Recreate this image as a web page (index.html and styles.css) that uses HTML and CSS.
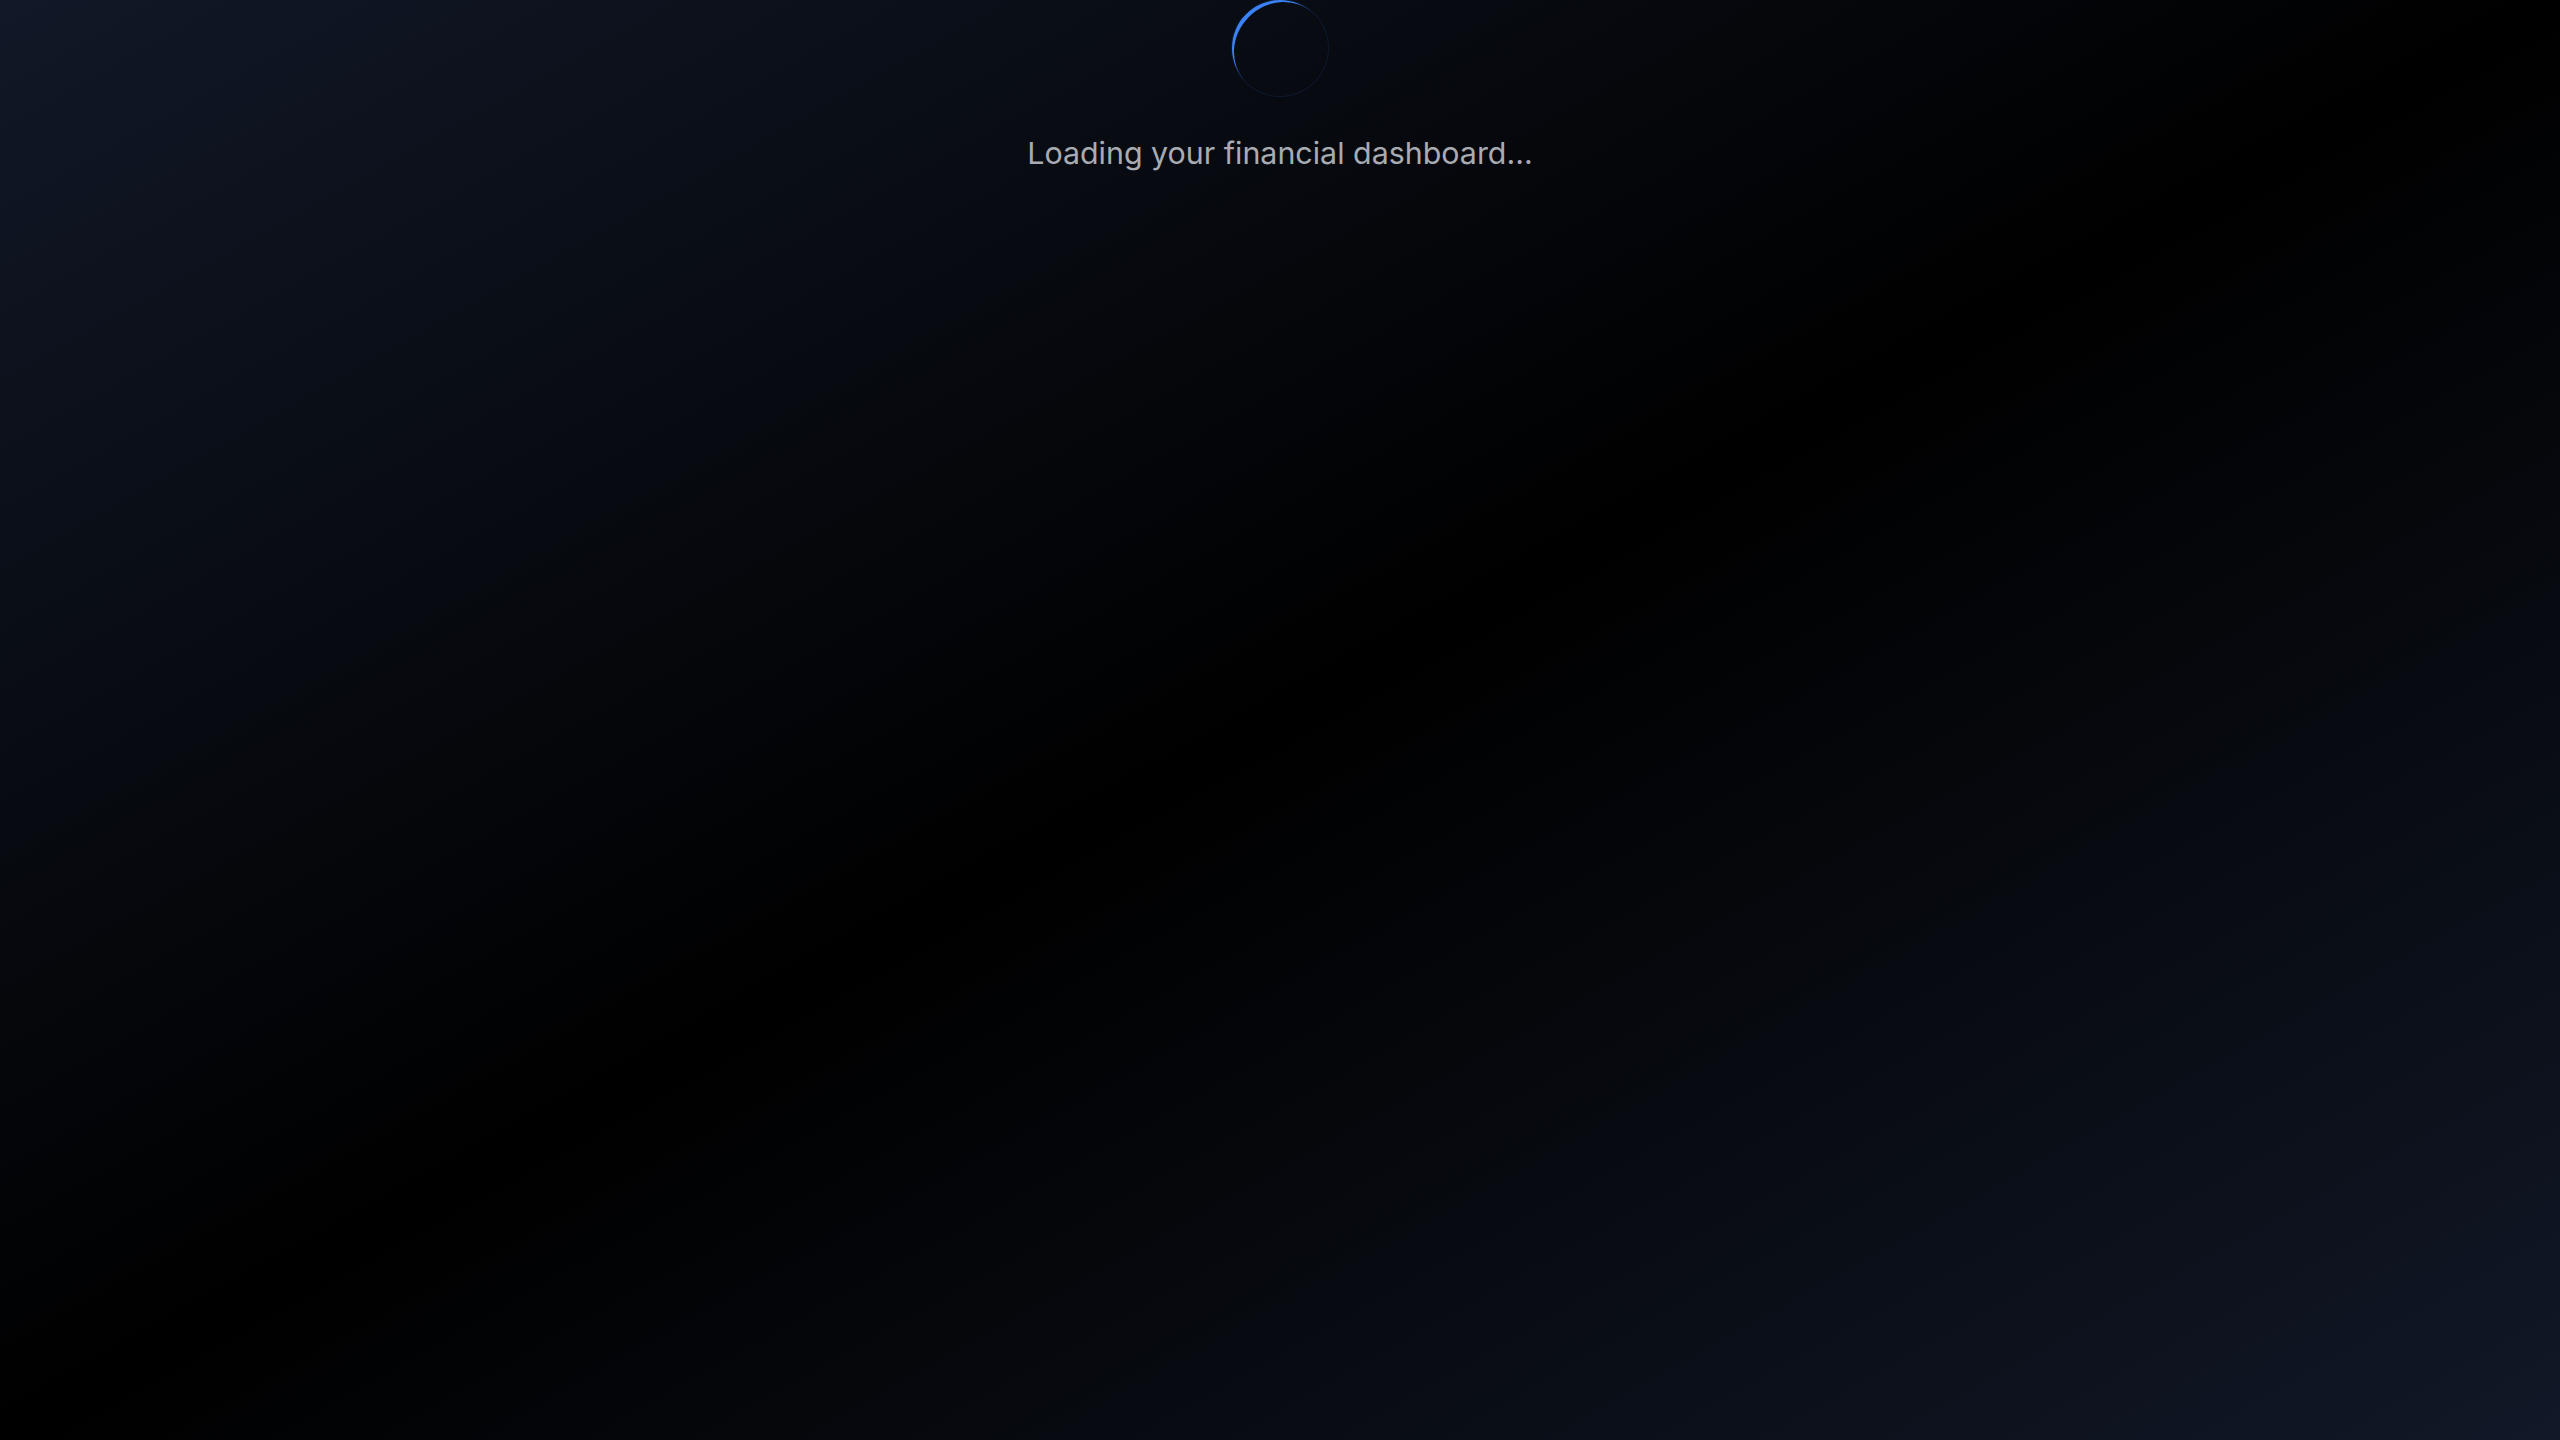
FILE: index.html
```html
<!DOCTYPE html>
<html lang="en">
<head>
<meta charset="utf-8">
<title>Loading</title>
<link rel="stylesheet" href="styles.css">
</head>
<body>
<main class="screen">
  <div class="loader">
    <div class="spinner"></div>
    <p class="loading-text">Loading your financial dashboard...</p>
  </div>
</main>
</body>
</html>
```

FILE: styles.css
```css
html, body {
  margin: 0;
  padding: 0;
  height: 100%;
}
body {
  font-family: Inter, "Noto Sans", "Liberation Sans", sans-serif;
}
.screen {
  min-height: 100vh;
  background: linear-gradient(to bottom right, #111827, #000000, #111827);
  display: flex;
  justify-content: center;
  align-items: flex-start;
}
.loader {
  display: flex;
  flex-direction: column;
  align-items: center;
}
.spinner {
  width: 96px;
  height: 96px;
  box-sizing: border-box;
  border-radius: 50%;
  border-style: solid;
  border-width: 0 0 4px 0;
  border-color: rgba(59,130,246,0.25) rgba(59,130,246,0.25) #3b82f6 rgba(59,130,246,0.25);
  box-shadow: 0 0 0 1px rgba(59,130,246,0.12);
  transform: rotate(135deg);
}
.loading-text {
  margin: 39px 0 0;
  font-size: 30.4px;
  line-height: 36px;
  color: #a8abb2;
}
```
